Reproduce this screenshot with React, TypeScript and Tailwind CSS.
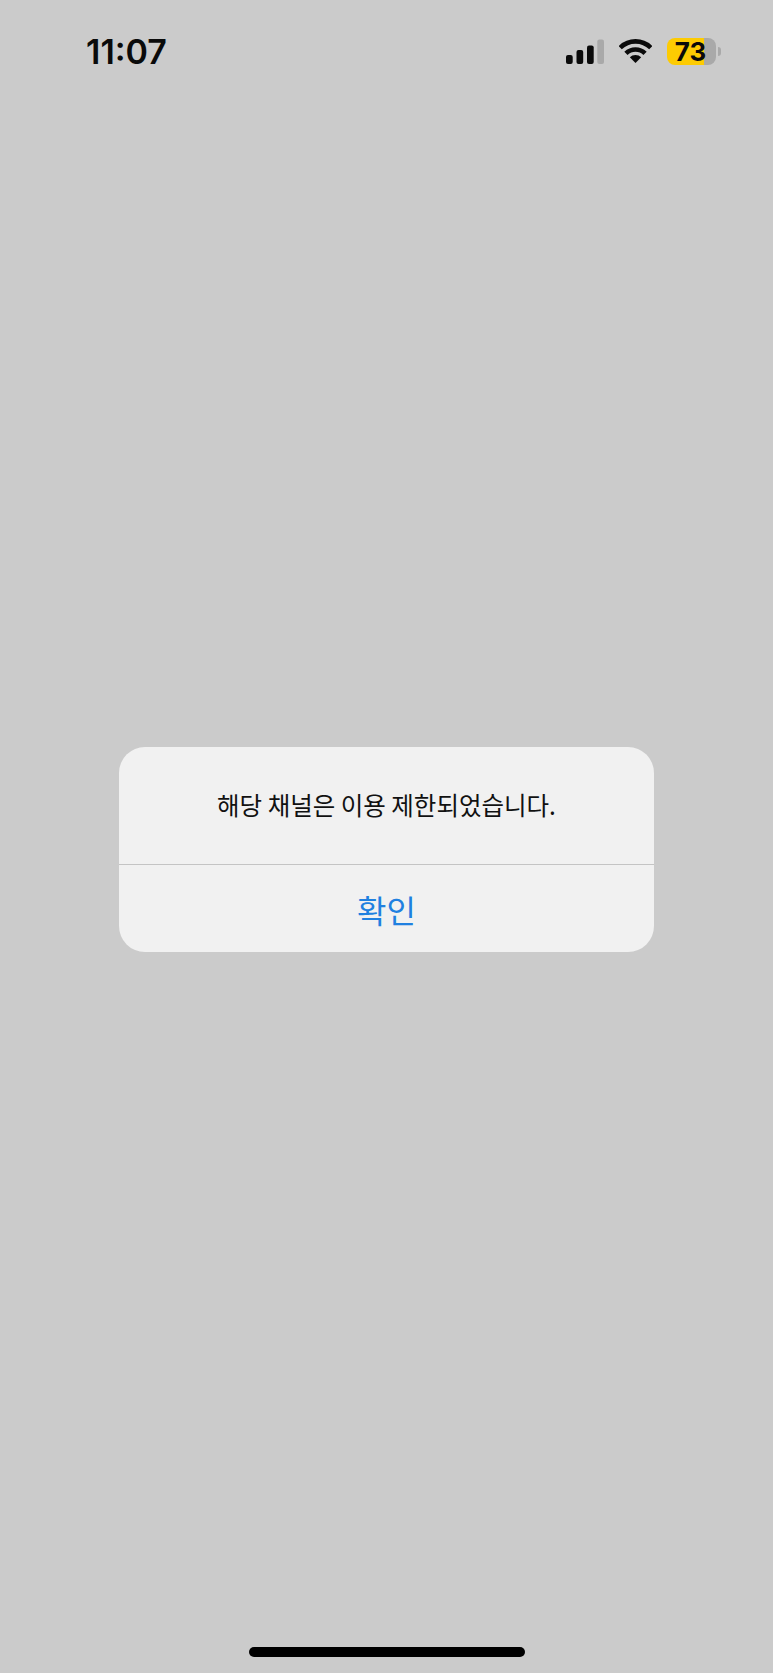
export default function App() {
  const sans = '"Inter", "Liberation Sans", sans-serif';
  const kr = '"Noto Sans CJK KR", sans-serif';
  return (
    <div className="relative h-[1673px] w-[773px] overflow-hidden bg-[#cbcbcb]">
      <div className="flex h-[102px] items-start justify-between pl-[86px] pr-[52px] pt-[32px]">
        <span className="text-[34px] font-semibold leading-[40px] tracking-[0px] text-[#0a0a0a]" style={{ fontFamily: sans }}>11:07</span>
        <div className="flex items-center gap-[15px] pt-[6px]">
          <svg width="38" height="25" viewBox="0 0 38 25">
            <rect x="0" y="16" width="6.7" height="9" rx="2" fill="#0a0a0a" />
            <rect x="10.5" y="11" width="6.7" height="14" rx="2" fill="#0a0a0a" />
            <rect x="21" y="6.5" width="6.7" height="18.5" rx="2" fill="#0a0a0a" />
            <rect x="31.3" y="0.5" width="6.7" height="24.5" rx="2" fill="#a9a9a9" />
          </svg>
          <svg width="33" height="25" viewBox="0 0 33 25">
            <path d="M1.2 8.7 A21.7 21.7 0 0 1 31.8 8.7" fill="none" stroke="#0a0a0a" strokeWidth="4.6" />
            <path d="M6.95 14.45 A13.5 13.5 0 0 1 26.05 14.45" fill="none" stroke="#0a0a0a" strokeWidth="4.6" />
            <path d="M10.8 18.3 A8 8 0 0 1 22.2 18.3 L16.5 24 Z" fill="#0a0a0a" />
          </svg>
          <div className="flex items-center">
            <div className="flex h-[27px] w-[49px] items-center justify-center rounded-[8px] bg-[linear-gradient(90deg,#fdcb02_37px,#a9a9a9_37px)] pr-[2px]">
              <span className="text-[26px] font-bold leading-[27px] text-[#0a0a0a]" style={{ fontFamily: sans }}>73</span>
            </div>
            <div className="ml-[2px] h-[9px] w-[3px] rounded-r-full bg-[#a9a9a9]" />
          </div>
        </div>
      </div>

      <div className="ml-[119px] mt-[645px] w-[535px] overflow-hidden rounded-[26px] bg-[#f1f1f1]" style={{ fontFamily: kr }}>
        <div className="flex h-[118px] items-center justify-center border-b border-[#c4c4c4] pb-[2px] text-[24.5px] leading-[34px] text-[#111111]">
          해당 채널은 이용 제한되었습니다.
        </div>
        <div className="flex h-[87px] items-center justify-center text-[32px] leading-[40px] text-[#2080e0]">
          확인
        </div>
      </div>

      <div className="absolute bottom-[16px] left-[249px] h-[10px] w-[276px] rounded-full bg-black" />
    </div>
  );
}
